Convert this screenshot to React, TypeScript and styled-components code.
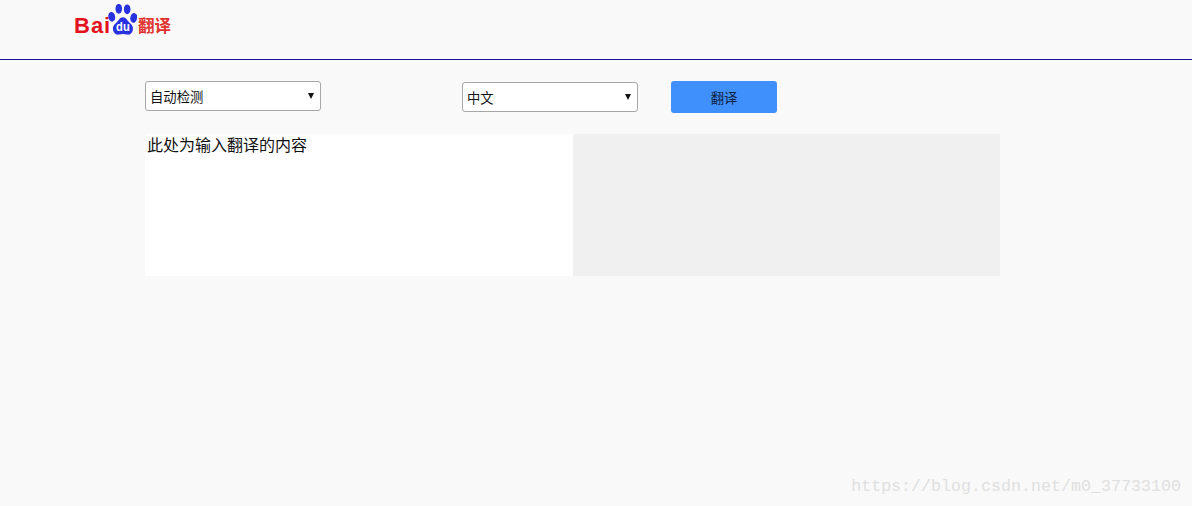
import React from 'react'
import styled, { createGlobalStyle } from 'styled-components'

const GlobalStyle = createGlobalStyle`
  html, body {
    margin: 0;
    height: 100%;
    background: #f9f9f9;
    font-family: 'Liberation Sans', 'Noto Sans CJK SC', sans-serif;
    overflow: hidden;
  }
`

const PawLogo = () => (
  <svg width='29' height='31' viewBox='2 3 31 29' preserveAspectRatio='none'>
    <ellipse cx='6' cy='15' rx='3.6' ry='4.6' fill='#2932e1' transform='rotate(-14 6 15)' />
    <ellipse cx='13.5' cy='7.5' rx='3.5' ry='4.6' fill='#2932e1' />
    <ellipse cx='22.5' cy='8' rx='3.5' ry='4.6' fill='#2932e1' />
    <ellipse cx='29.5' cy='16' rx='3.6' ry='4.6' fill='#2932e1' transform='rotate(14 29.5 16)' />
    <path
      d='M18 15.5c-3.2 0-4.6 3-6.8 4.8-2.4 1.9-4.4 3.6-3.8 7 .6 3.3 3.6 4.7 6.4 4.3 1.6-.2 2.8-.6 4.2-.6 1.4 0 2.6.4 4.2.6 2.8.4 5.8-1 6.4-4.3.6-3.4-1.4-5.1-3.8-7-2.2-1.8-3.6-4.8-6.8-4.8z'
      fill='#2932e1'
    />
    <text x='18' y='28.5' textAnchor='middle' fontSize='12' fontWeight='700' fill='#fff' fontFamily='Liberation Sans'>
      du
    </text>
  </svg>
)

const App = () => {
  return (
    <Page>
      <GlobalStyle />
      <Header>
        <Logo>
          <LogoWord>Bai</LogoWord>
          <PawSlot>
            <PawLogo />
          </PawSlot>
          <LogoCn>翻译</LogoCn>
        </Logo>
      </Header>
      <Toolbar>
        <SelectWrap>
          <LangSelect defaultValue='auto'>
            <option value='auto'>自动检测</option>
            <option value='zh'>中文</option>
            <option value='en'>英语</option>
          </LangSelect>
        </SelectWrap>
        <SelectWrap $target>
          <LangSelect defaultValue='zh'>
            <option value='zh'>中文</option>
            <option value='en'>英语</option>
          </LangSelect>
        </SelectWrap>
        <TranslateButton>翻译</TranslateButton>
      </Toolbar>
      <Panels>
        <SourceInput placeholder='此处为输入翻译的内容' />
        <ResultPanel />
      </Panels>
      <Watermark>https://blog.csdn.net/m0_37733100</Watermark>
    </Page>
  )
}

const Page = styled.div`
  position: relative;
  height: 506px;
  background: #f9f9f9;
  overflow: hidden;
`

const Header = styled.header`
  box-sizing: border-box;
  height: 60px;
  padding-left: 74px;
  border-bottom: 1px solid #14149a;
`

const Logo = styled.div`
  display: flex;
  align-items: flex-start;
  height: 59px;
`

const LogoWord = styled.span`
  width: 35px;
  margin-top: 13px;
  font-size: 22px;
  line-height: 25px;
  font-weight: 700;
  letter-spacing: 1px;
  color: #e1141e;
`

const PawSlot = styled.span`
  display: block;
  width: 29px;
  margin: 4px 0 0 -1px;
`

const LogoCn = styled.span`
  margin: 15px 0 0 1px;
  font-size: 16.5px;
  line-height: 22px;
  font-weight: 700;
  color: #e1322d;
`

const Toolbar = styled.div`
  display: flex;
  align-items: flex-start;
  padding: 21px 0 0 145px;
  height: 74px;
  box-sizing: border-box;
`

const SelectWrap = styled.div<{ $target?: boolean }>`
  position: relative;
  width: 176px;
  height: 30px;
  margin: ${(p) => (p.$target ? '1px 33px 0 0' : '0 141px 0 0')};

  &::after {
    content: '';
    position: absolute;
    top: 12px;
    right: 7px;
    border-style: solid;
    border-width: 6px 3px 0 3px;
    border-color: #111 transparent transparent transparent;
    pointer-events: none;
  }
`

const LangSelect = styled.select`
  appearance: none;
  box-sizing: border-box;
  width: 100%;
  height: 100%;
  padding: 2px 20px 0 4px;
  border: 1px solid #a6a6a6;
  border-radius: 3px;
  background: #fff;
  color: #111;
  font-family: 'Liberation Sans', 'Noto Sans CJK SC', sans-serif;
  font-size: 13.33px;
`

const TranslateButton = styled.button`
  width: 106px;
  height: 32px;
  padding: 0;
  border: none;
  border-radius: 3px;
  background: #3f8ffd;
  color: #10233f;
  font-family: 'Liberation Sans', 'Noto Sans CJK SC', sans-serif;
  font-size: 13.33px;
`

const Panels = styled.div`
  display: flex;
  width: 855px;
  height: 142px;
  margin: 0 0 0 145px;
`

const SourceInput = styled.textarea`
  box-sizing: border-box;
  width: 428px;
  height: 100%;
  padding: 0 2px;
  border: none;
  outline: none;
  resize: none;
  background: #fff;
  font-family: 'Noto Sans CJK SC', sans-serif;
  font-size: 16px;
  line-height: 21px;

  &::placeholder {
    color: #111;
    opacity: 1;
  }
`

const ResultPanel = styled.div`
  flex: 1;
  background: #f0f0f0;
`

const Watermark = styled.div`
  position: absolute;
  right: 11px;
  bottom: 8px;
  font-family: 'Liberation Mono', monospace;
  font-size: 16.67px;
  line-height: 22px;
  color: #e0e0e0;
`

export default App
